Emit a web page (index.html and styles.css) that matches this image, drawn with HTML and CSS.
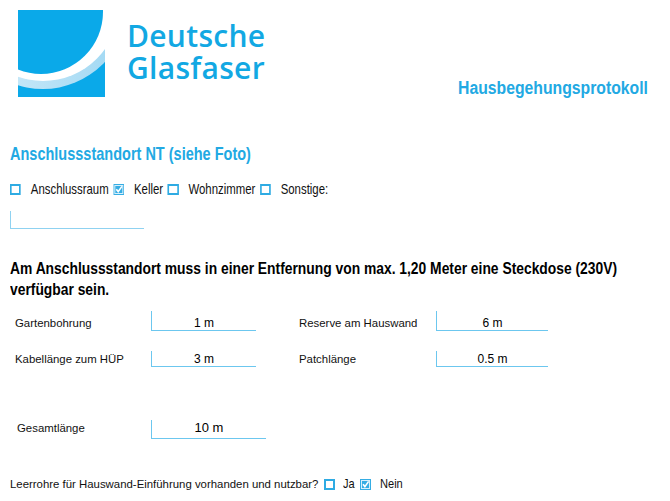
FILE: index.html
```html
<!DOCTYPE html>
<html lang="de">
<head>
<meta charset="utf-8">
<title>Hausbegehungsprotokoll</title>
<link rel="stylesheet" href="styles.css">
</head>
<body>
<div class="page">
  <header class="header">
    <div class="logo">
      <svg class="logo-mark" width="87" height="87" viewBox="0 0 87 87">
        <defs>
          <clipPath id="sq"><rect width="87" height="87"/></clipPath>
          <linearGradient id="pale" x1="0" y1="0" x2="1" y2="0">
            <stop offset="0" stop-color="#d8effa"/>
            <stop offset="1" stop-color="#9dd7f3"/>
          </linearGradient>
        </defs>
        <g clip-path="url(#sq)">
          <rect width="87" height="87" fill="#0aa9e9"/>
          <circle cx="25" cy="-5" r="84" fill="url(#pale)"/>
          <circle cx="25" cy="-5" r="76" fill="#ffffff"/>
          <circle cx="23" cy="2" r="62" fill="#0aa9e9"/>
        </g>
      </svg>
      <div class="logo-text"><span>Deutsche</span><span>Glasfaser</span></div>
    </div>
    <h1 class="doc-title"><span class="narrow-r">Hausbegehungsprotokoll</span></h1>
  </header>

  <section class="location">
    <h2 class="section-title"><span class="narrow">Anschlussstandort NT (siehe Foto)</span></h2>
    <div class="options">
      <span class="box"></span><span class="opt-label">Anschlussraum</span>
      <svg class="box-checked" width="13.4" height="11" viewBox="0 0 11 11" preserveAspectRatio="none"><rect width="11" height="11" fill="#35ade4"/><rect x="1.5" y="1.5" width="8" height="8" fill="none" stroke="#d6effb" stroke-width="1"/><path d="M3 5.2 L4.9 7.6 L8.6 2.4" fill="none" stroke="#fff" stroke-width="1.6"/></svg><span class="opt-label">Keller</span>
      <span class="box"></span><span class="opt-label">Wohnzimmer</span>
      <span class="box"></span><span class="opt-label">Sonstige:</span>
    </div>
    <div class="text-field"></div>
  </section>

  <p class="notice">Am Anschlussstandort muss in einer Entfernung von max. 1,20 Meter eine Steckdose (230V) verfügbar sein.</p>

  <div class="measures">
    <span class="label">Gartenbohrung</span>
    <span class="field">1 m</span>
    <span></span>
    <span class="label">Reserve am Hauswand</span>
    <span class="field">6 m</span>

    <span class="label">Kabellänge zum HÜP</span>
    <span class="field field-short">3 m</span>
    <span></span>
    <span class="label">Patchlänge</span>
    <span class="field field-short">0.5 m</span>
  </div>

  <div class="total">
    <span class="label total-label">Gesamtlänge</span>
    <span class="field total-field">10 m</span>
  </div>

  <div class="question">
    <span class="q-text">Leerrohre für Hauswand-Einführung vorhanden und nutzbar?</span>
    <span class="q-box"></span><span class="q-label q-yes">Ja</span>
    <svg class="q-checked" width="11" height="11" viewBox="0 0 11 11"><rect width="11" height="11" fill="#35ade4"/><rect x="1.5" y="1.5" width="8" height="8" fill="none" stroke="#d6effb" stroke-width="1"/><path d="M3 5.2 L4.9 7.6 L8.6 2.4" fill="none" stroke="#fff" stroke-width="1.6"/></svg><span class="q-label q-no">Nein</span>
  </div>
</div>
</body>
</html>
```

FILE: styles.css
```css
html, body {
  margin: 0;
  padding: 0;
  background: #ffffff;
}

.page {
  width: 670px;
  height: 501px;
  overflow: hidden;
  font-family: "Liberation Sans", Arial, sans-serif;
  color: #111111;
}

/* condensed look: Liberation Sans squeezed horizontally */
.narrow {
  display: inline-block;
  transform: scaleX(0.82);
  transform-origin: left center;
  white-space: nowrap;
}

.narrow-r {
  display: inline-block;
  transform: scaleX(0.9);
  transform-origin: right center;
  white-space: nowrap;
}

.header {
  display: flex;
  justify-content: space-between;
  align-items: flex-start;
  height: 87px;
  padding: 10px 22px 0 18px;
}

.logo {
  display: flex;
  align-items: flex-start;
  gap: 22px;
}

.logo-mark {
  display: block;
  flex: none;
}

.logo-text {
  display: flex;
  flex-direction: column;
  margin-top: 10px;
  font-family: "Open Sans", "Noto Sans", sans-serif;
  font-weight: 600;
  font-size: 30px;
  line-height: 32px;
  color: #12a8e3;
  letter-spacing: 0.3px;
}

.doc-title {
  margin: 68px 0 0 0;
  font-size: 17.5px;
  line-height: 20px;
  font-weight: 700;
  color: #22a9e3;
}

.location {
  padding-left: 10px;
}

.section-title {
  margin: 47px 0 0 0;
  font-size: 17.7px;
  line-height: 20px;
  font-weight: 700;
  color: #22a9e3;
}

.options {
  display: flex;
  align-items: center;
  width: 600px;
  height: 16px;
  margin-top: 17px;
  font-size: 13.9px;
  line-height: 16px;
  transform: scaleX(0.82);
  transform-origin: left center;
}

.box {
  display: inline-block;
  flex: none;
  box-sizing: border-box;
  width: 13.4px;
  height: 11px;
  border-style: solid;
  border-color: #2eabe3;
  border-width: 2px 2.4px;
  background: #ffffff;
}

.box-checked {
  display: block;
  flex: none;
}

.opt-label {
  margin: 0 5.5px 0 12px;
  white-space: nowrap;
  color: #111111;
}

.text-field {
  box-sizing: border-box;
  width: 134px;
  height: 18px;
  margin-top: 14px;
  border-left: 1px solid #8fd2f1;
  border-bottom: 1px solid #8fd2f1;
}

.notice {
  width: 793px;
  margin: 29px 0 0 10px;
  font-size: 17px;
  line-height: 21px;
  font-weight: 700;
  color: #000000;
  transform: scaleX(0.814);
  transform-origin: left top;
}

.measures {
  display: grid;
  grid-template-columns: 136px 105px 43px 137px 112px;
  grid-template-rows: 20px 16px;
  row-gap: 20px;
  align-items: end;
  margin-top: 11px;
  padding-left: 15px;
}

.label {
  font-size: 11.4px;
  line-height: 13px;
  padding-bottom: 1px;
  color: #111111;
  white-space: nowrap;
}

.field {
  box-sizing: border-box;
  display: flex;
  align-items: flex-end;
  justify-content: center;
  height: 20px;
  border-left: 1px solid #6cc7ef;
  border-bottom: 1px solid #6cc7ef;
  font-size: 12px;
  line-height: 13px;
  color: #000000;
}

.field-short {
  height: 16px;
}

.total {
  display: grid;
  grid-template-columns: 134px 115px;
  align-items: start;
  margin-top: 53px;
  padding-left: 17px;
}

.total-label {
  padding-top: 2px;
  font-size: 11.4px;
}

.total-field {
  height: 19px;
  font-size: 13px;
  line-height: 14px;
  padding-bottom: 3px;
}

.question {
  display: flex;
  align-items: center;
  height: 16px;
  margin-top: 37px;
  padding-left: 10px;
}

.q-text {
  font-size: 11.4px;
  line-height: 16px;
  margin-right: 6px;
  white-space: nowrap;
}

.q-box {
  display: inline-block;
  flex: none;
  box-sizing: border-box;
  width: 11px;
  height: 11px;
  border: 2px solid #2eabe3;
}

.q-checked {
  display: block;
  flex: none;
}

.q-label {
  display: inline-block;
  font-size: 13.5px;
  line-height: 16px;
  transform: scaleX(0.82);
  transform-origin: left center;
}

.q-yes {
  margin: 0 2px 0 8px;
}

.q-no {
  margin-left: 9px;
}
```
